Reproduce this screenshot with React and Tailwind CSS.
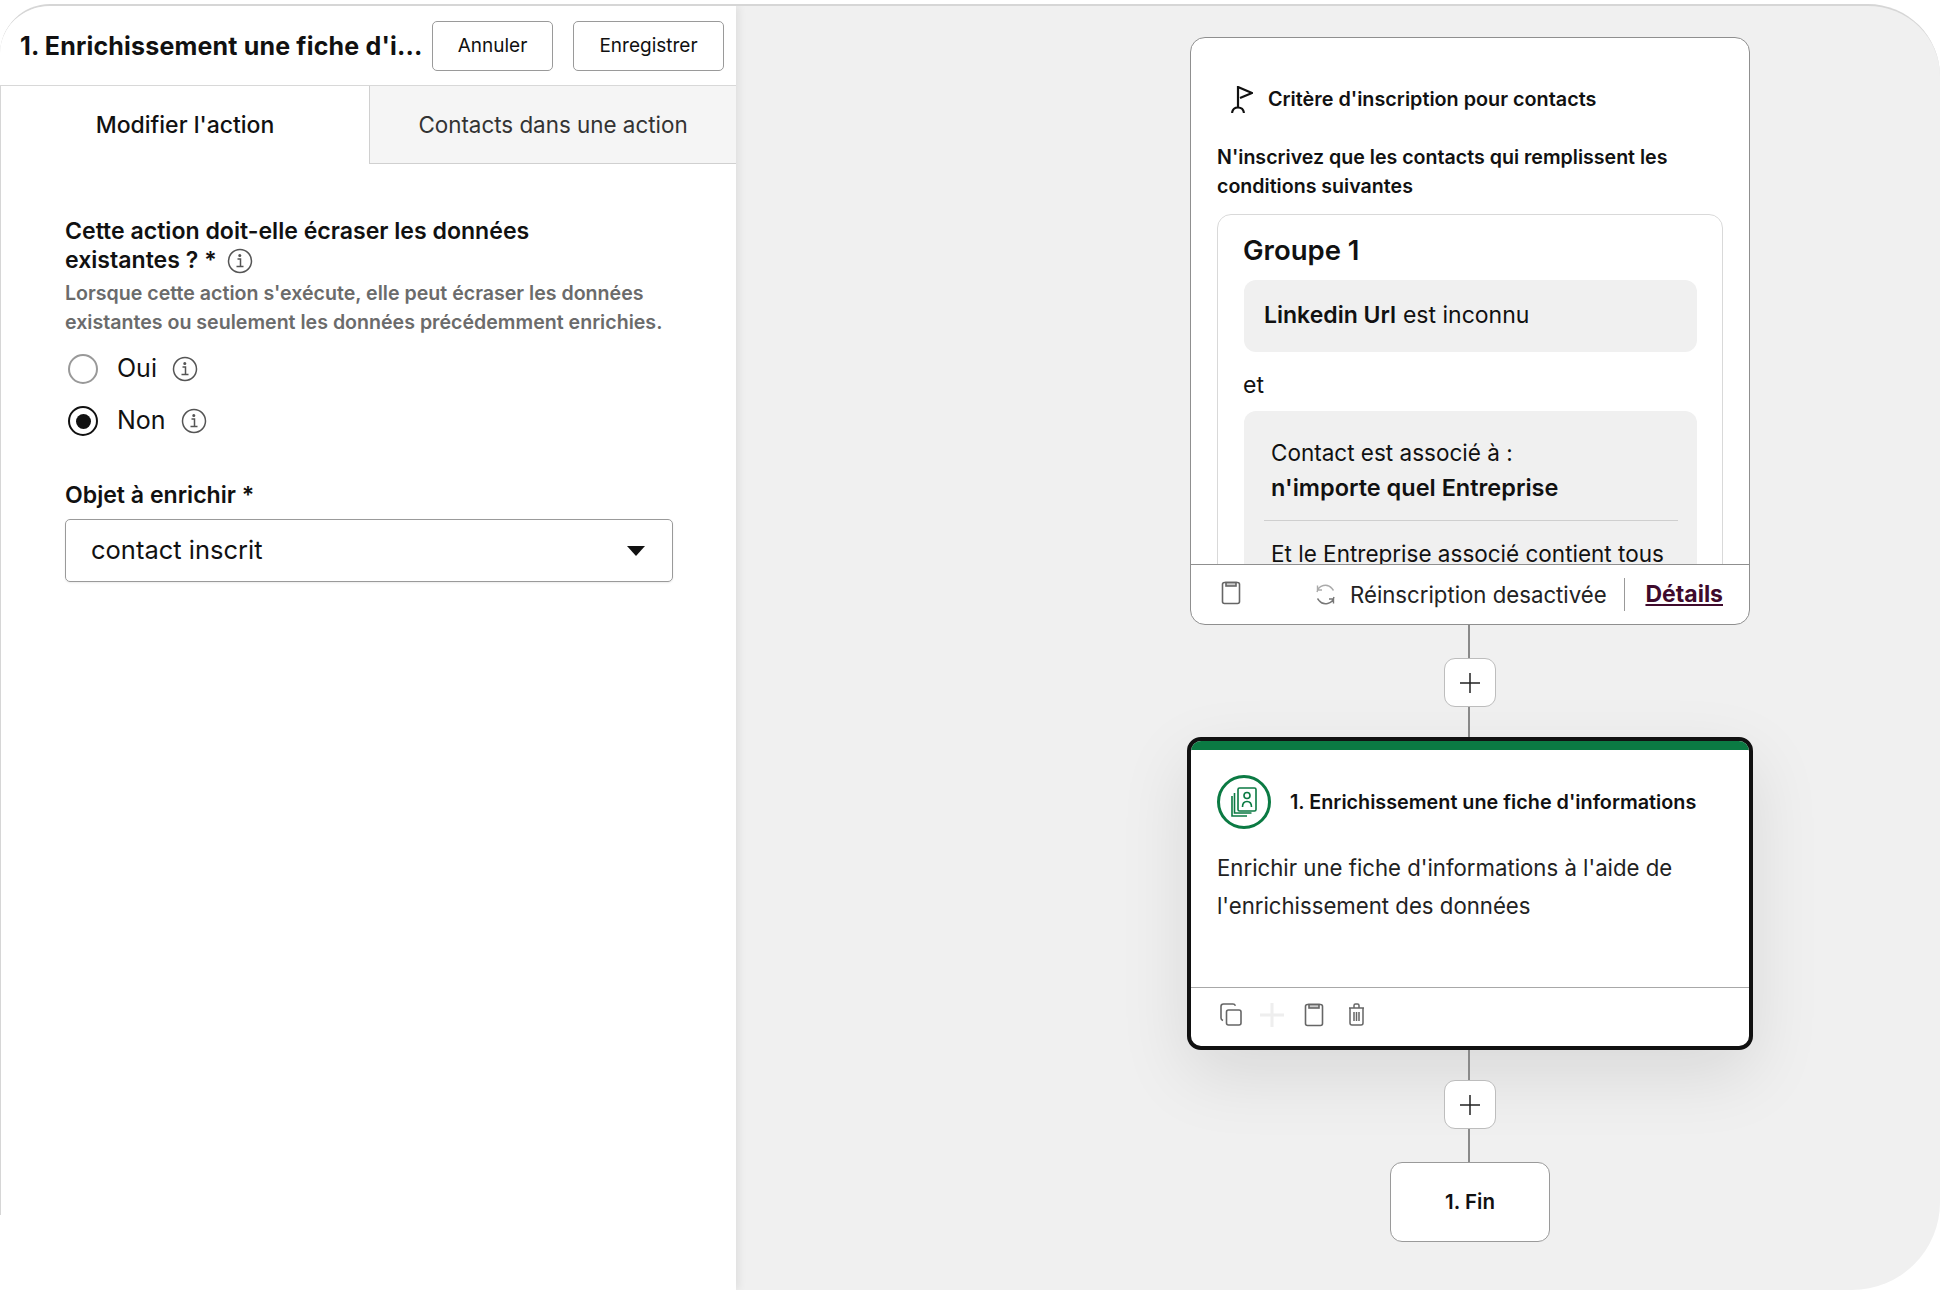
import React from "react";

function InfoIcon() {
  return (
    <svg width="26" height="26" viewBox="0 0 26 26" fill="none" stroke="#555" strokeWidth="1.5">
      <circle cx="13" cy="13" r="11.5" />
      <path d="M10.5 11h3v7M9.5 18.5h7" />
      <circle cx="12.8" cy="7.5" r="0.8" fill="#555" />
    </svg>
  );
}

function ClipboardIcon() {
  return (
    <svg width="20" height="24" viewBox="0 0 20 24" fill="none" stroke="#666" strokeWidth="1.6">
      <rect x="1.5" y="1.500" width="17" height="21" rx="2" />
      <rect x="5" y="1.500" width="10" height="3.5" fill="#ccc" />
    </svg>
  );
}

function CopyIcon() {
  return (
    <svg width="22" height="23" viewBox="0 0 22 23" fill="none" stroke="#666" strokeWidth="1.6">
      <rect x="6.5" y="7" width="14.5" height="15" rx="2" />
      <path d="M3 17.5C1.8 17 1 16 1 15V3.5C1 2 2 1 3.5 1H13c1 0 2 .7 2.4 1.7" />
    </svg>
  );
}

function TrashIcon() {
  return (
    <svg width="17" height="23" viewBox="0 0 17 23" fill="none" stroke="#666" strokeWidth="1.5">
      <path d="M1 5h15M6 5V2.5C6 1.700 6.700 1 7.500 1h2C10.300 1 11 1.700 11 2.500V5" />
      <path d="M2 5v15c0 1.200.8 2 2 2h9c1.200 0 2-.8 2-2V5" />
      <path d="M6 9v9M8.500 9v9M11 9v9" />
    </svg>
  );
}

function RefreshIcon() {
  return (
    <svg width="21" height="21" viewBox="0 0 21 21" fill="none" stroke="#777" strokeWidth="1.4">
      <path d="M2 8a8.500 8.500 0 0 1 15-3.500l1.500 2M2.500 1.500V6h4.500" stroke="#aaa" />
      <path d="M19 13a8.500 8.500 0 0 1-15 3.500L2.500 14.500M18.500 19.500V15H14" />
    </svg>
  );
}

function FlagIcon() {
  return (
    <svg width="22" height="27" viewBox="0 0 22 27" fill="none" stroke="#111" strokeWidth="2.2">
      <path d="M7 21V1l14 6-12 5" />
      <path d="M1 27c.5-3.500 3-5.500 6-5.500s5.500 2 6 5.500" />
    </svg>
  );
}

function PlusButton() {
  return (
    <div className="flex h-[49px] w-[52px] shrink-0 items-center justify-center rounded-[11px] border border-[#bdbdbd] bg-white">
      <svg width="20" height="20" viewBox="0 0 20 20" stroke="#222" strokeWidth="1.5">
        <path d="M10 0v20M0 10h20" />
      </svg>
    </div>
  );
}

function Line({ height }) {
  return <div className={`mr-[2px] w-[2px] shrink-0 bg-[#8a8a8a] ${height}`}></div>;
}

function App() {
  return (
    <div className="h-[1290px] w-[1940px] overflow-hidden bg-white pt-[4px] text-[#111] [font-family:Inter,sans-serif]">
      <div className="flex h-[1286px] overflow-hidden rounded-tl-[50px] rounded-tr-[72px] rounded-br-[88px] border-t-2 border-[#d6d6d6] bg-[#f0f0f0]">
        <div
          id="left"
          className="relative z-10 flex w-[736px] shrink-0 flex-col bg-white shadow-[3px_0_8px_rgba(0,0,0,0.07)]"
        >
          <div
            id="header"
            className="flex h-[80px] shrink-0 items-center border-b border-[#d8d8d8] pl-[20px] pr-[12px]"
          >
            <h1 className="flex-1 whitespace-nowrap pt-[2px] text-[25px] font-bold tracking-[0.18px]">
              1. Enrichissement une fiche d'i...
            </h1>
            <button className="h-[50px] w-[121px] rounded-[5px] border border-[#9a9a9a] pt-[2px] text-[19px]">
              Annuler
            </button>
            <button className="ml-[20px] h-[50px] w-[151px] rounded-[5px] border border-[#9a9a9a] pt-[2px] text-[19px]">
              Enregistrer
            </button>
          </div>
          <div className="h-[1129px] border-l border-[#d6d6d6]">
            <div id="tabs" className="flex h-[78px] text-[22.400px]">
              <div className="flex w-[368px] items-center justify-center pt-[1px] text-[23px] font-medium">
                Modifier l'action
              </div>
              <div className="flex flex-1 items-center justify-center border-b border-l border-[#d0d0d0] bg-[#f5f5f5] pt-[1px] text-[#333]">
                Contacts dans une action
              </div>
            </div>
            <div className="pl-[64px] pr-[63px] pt-[53px]">
              <div className="text-[23.100px] font-semibold leading-[29px]">
                <p>Cette action doit-elle écraser les données</p>
                <p className="flex items-center gap-[10px]">
                  existantes ? *
                  <InfoIcon />
                </p>
              </div>
              <p className="mt-[4px] whitespace-nowrap text-[19.600px] font-semibold leading-[29px] text-[#6b6b6b]">
                Lorsque cette action s'exécute, elle peut écraser les données
                <br />
                existantes ou seulement les données précédemment enrichies.
              </p>
              <div className="mt-[17px] flex h-[30px] items-center pl-[3px] text-[25px]">
                <span className="h-[30px] w-[30px] rounded-full border-2 border-[#999]"></span>
                <span className="ml-[19px]">Oui</span>
                <span className="ml-[15px] flex">
                  <InfoIcon />
                </span>
              </div>
              <div className="mt-[22px] flex h-[30px] items-center pl-[3px] text-[25px]">
                <span className="flex h-[30px] w-[30px] items-center justify-center rounded-full border-2 border-[#111]">
                  <span className="h-[15px] w-[15px] rounded-full bg-[#111]"></span>
                </span>
                <span className="ml-[19px]">Non</span>
                <span className="ml-[15px] flex">
                  <InfoIcon />
                </span>
              </div>
              <p className="mt-[45px] text-[23.100px] font-semibold leading-[29px]">Objet à enrichir *</p>
              <div className="mt-[9px] flex h-[63px] w-[608px] items-center justify-between rounded-[5px] border border-[#9a9a9a] pl-[25px] pr-[27px] text-[25.500px] shadow-[0_1px_2px_rgba(0,0,0,0.08)]">
                contact inscrit
                <svg width="18" height="10" viewBox="0 0 18 10" fill="#111">
                  <path d="M0 0h18L9 10z" />
                </svg>
              </div>
            </div>
          </div>
        </div>

        <div id="canvas" className="flex flex-1 flex-col pl-[451px] pt-[31px]">
          <div className="flex w-[566px] flex-col items-center">
            <div className="flex h-[588px] w-[560px] shrink-0 flex-col overflow-hidden rounded-[15px] border border-[#8f8f8f] bg-white">
              <div className="h-[526px] overflow-hidden px-[26px] pt-[47px]">
                <div className="flex items-center gap-[15px] pl-[14px]">
                  <FlagIcon />
                  <p className="text-[19.800px] font-semibold">Critère d'inscription pour contacts</p>
                </div>
                <p className="mt-[28px] text-[19.600px] font-semibold leading-[29px]">
                  N'inscrivez que les contacts qui remplissent les conditions suivantes
                </p>
                <div className="mt-[13px] h-[400px] rounded-t-[14px] border border-[#d9d9d9] px-[25px] pt-[17px]">
                  <p className="text-[27.500px] font-semibold leading-[36px]">Groupe 1</p>
                  <div className="ml-[1px] mt-[12px] flex h-[72px] items-center rounded-[12px] bg-[#f0f0f0] px-[20px] text-[23px]">
                    <span className="font-semibold">Linkedin Url</span>
                    <span className="ml-[7px]">est inconnu</span>
                  </div>
                  <p className="mt-[19px] h-[28px] text-[23px] leading-[28px]">et</p>
                  <div className="ml-[1px] mt-[12px] h-[200px] rounded-t-[12px] bg-[#f0f0f0] px-[20px] pt-[24px] text-[22.500px] leading-[35px]">
                    <p className="pl-[7px]">Contact est associé à :</p>
                    <p className="pl-[7px] text-[23.500px] font-semibold">n'importe quel Entreprise</p>
                    <div className="mt-[15px] h-[1px] w-[414px] bg-[#cfcfcf]"></div>
                    <p className="mt-[15px] pl-[7px]">Et le Entreprise associé contient tous</p>
                  </div>
                </div>
              </div>
              <div className="flex flex-1 items-center border-t border-[#8f8f8f] pl-[30px] pr-[26px]">
                <span className="-mt-[3px] flex">
                  <ClipboardIcon />
                </span>
                <span className="ml-[74px] flex">
                  <RefreshIcon />
                </span>
                <span className="ml-[14px] whitespace-nowrap text-[22.200px] text-[#222]">
                  Réinscription desactivée
                </span>
                <span className="ml-auto h-[33px] w-[1px] bg-[#999]"></span>
                <a className="ml-[20px] text-[23px] font-bold text-[#3f0a2c] underline">Détails</a>
              </div>
            </div>
            <Line height="h-[33px]" />
            <PlusButton />
            <Line height="h-[30px]" />
            <div className="flex h-[313px] w-[566px] shrink-0 flex-col overflow-hidden rounded-[14px] border-4 border-[#111] bg-white shadow-[0_24px_70px_rgba(0,0,0,0.1)]">
              <div className="h-[9px] shrink-0 bg-[#0b7a43]"></div>
              <div className="flex items-center gap-[19px] pl-[26px] pt-[25px]">
                <div className="flex h-[54px] w-[54px] items-center justify-center rounded-full border-[3px] border-[#0b7a43]">
                  <svg width="26" height="30" viewBox="0 0 26 30" fill="none" stroke="#0b7a43" strokeWidth="1.6">
                    <rect x="7" y="1" width="18" height="23" rx="1.500" />
                    <path d="M3.500 6v20h17" />
                    <path d="M1 9v20h15" />
                    <circle cx="16" cy="8.500" r="3" />
                    <path d="M11.500 20c0-3.500 2-5.500 4.500-5.500s4.500 2 4.500 5.500" />
                  </svg>
                </div>
                <p className="pt-[1px] text-[19.800px] font-semibold">1. Enrichissement une fiche d'informations</p>
              </div>
              <p className="mt-[20px] px-[26px] text-[22.200px] leading-[38px] text-[#222]">
                Enrichir une fiche d'informations à l'aide de l'enrichissement des données
              </p>
              <div className="mt-auto flex h-[59px] items-center border-t border-[#a8a8a8] pb-[5px] pl-[29px]">
                <CopyIcon />
                <svg className="ml-[18px] opacity-10" width="24" height="24" viewBox="0 0 24 24" stroke="#666" strokeWidth="3">
                  <path d="M12 0v24M0 12h24" />
                </svg>
                <span className="ml-[20px] flex">
                  <ClipboardIcon />
                </span>
                <span className="ml-[24px] flex">
                  <TrashIcon />
                </span>
              </div>
            </div>
            <Line height="h-[30px]" />
            <PlusButton />
            <Line height="h-[33px]" />
            <div className="flex h-[80px] w-[160px] shrink-0 items-center justify-center rounded-[12px] border border-[#9a9a9a] bg-white text-[20.500px] font-semibold">
              1. Fin
            </div>
          </div>
        </div>
      </div>
    </div>
  );
}

export default App;
